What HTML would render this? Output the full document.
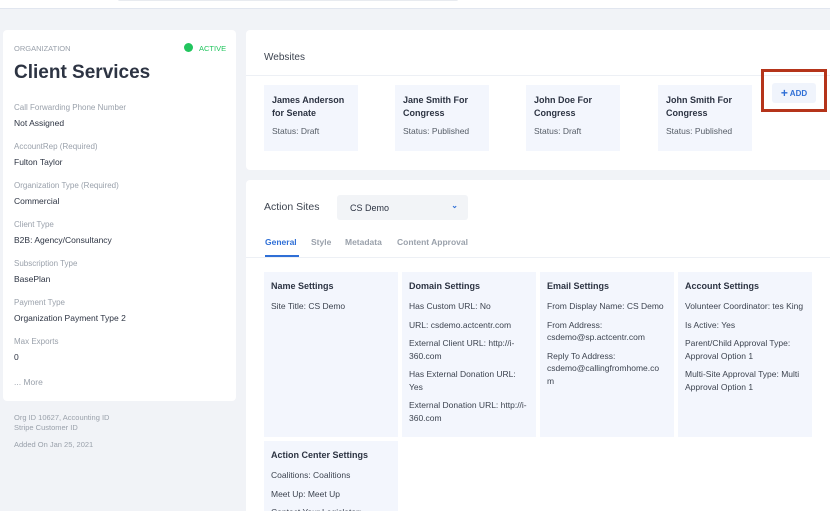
<!DOCTYPE html>
<html><head><meta charset="utf-8"><style>
*{margin:0;padding:0;box-sizing:border-box}
html,body{width:830px;height:511px;overflow:hidden}
body{background:#f1f3f7;font-family:"Liberation Sans",Arial,sans-serif;color:#2d3443;position:relative}
.a{position:absolute}
.card{position:absolute;background:#fff;border-radius:4px}
.lbl{position:absolute;left:11px;font-size:8px;color:#9aa1ab}
.val{position:absolute;left:11px;font-size:8.5px;color:#2d3443}
.ws{position:absolute;top:85px;width:94px;height:66px;background:#f3f6fd;padding:9px 8px}
.ws b{display:block;font-size:9px;line-height:13px;color:#2d3443}
.ws span{display:block;font-size:8.5px;color:#555c66;margin-top:6px}
.cell{position:absolute;background:#f3f6fd;padding:9px 7px}
.cell b{display:block;font-size:9px;color:#2d3443;margin-bottom:9px}
.cell p{font-size:8.5px;line-height:12.5px;color:#3d4450;margin-bottom:6px}
.tab{position:absolute;top:237px;font-size:8.5px;font-weight:bold;color:#9aa1ab}
</style></head><body>
<div class="a" style="left:0;top:0;width:830px;height:9px;background:#fff;border-bottom:1px solid #e1e6ef"></div>
<div class="a" style="left:118px;top:-2px;width:340px;height:3px;border:1px solid #e8ebf0;border-radius:2px;background:#fff"></div>

<div class="card" style="left:3px;top:30px;width:233px;height:371px">
<div class="lbl" style="top:14px;font-size:7.5px">ORGANIZATION</div>
<div class="a" style="left:181px;top:13px;width:9px;height:9px;border-radius:50%;background:#22c55e"></div>
<div class="a" style="left:196px;top:14px;font-size:7.5px;color:#22c55e">ACTIVE</div>
<div class="a" style="left:11px;top:32px;font-size:19px;font-weight:bold;color:#2d3443">Client Services</div>
<div class="lbl" style="top:73px">Call Forwarding Phone Number</div><div class="val" style="top:88px">Not Assigned</div>
<div class="lbl" style="top:112px">AccountRep (Required)</div><div class="val" style="top:127px">Fulton Taylor</div>
<div class="lbl" style="top:151px">Organization Type (Required)</div><div class="val" style="top:166px">Commercial</div>
<div class="lbl" style="top:190px">Client Type</div><div class="val" style="top:205px">B2B: Agency/Consultancy</div>
<div class="lbl" style="top:229px">Subscription Type</div><div class="val" style="top:244px">BasePlan</div>
<div class="lbl" style="top:268px">Payment Type</div><div class="val" style="top:283px">Organization Payment Type 2</div>
<div class="lbl" style="top:307px">Max Exports</div><div class="val" style="top:322px">0</div>
<div class="lbl" style="top:347px;font-size:8.5px">... More</div>
</div>
<div class="a" style="left:14px;top:413px;font-size:7.5px;color:#9aa1ab;line-height:10px">Org ID 10627, Accounting ID<br>Stripe Customer ID</div>
<div class="a" style="left:14px;top:440px;font-size:7.5px;color:#9aa1ab">Added On Jan 25, 2021</div>

<div class="card" style="left:246px;top:30px;width:590px;height:140px">
<div class="a" style="left:18px;top:22px;font-size:10px;color:#3d4450">Websites</div>
<div class="a" style="left:0;top:45px;width:590px;height:1px;background:#edf0f5"></div>
</div>
<div class="ws" style="left:264px"><b>James Anderson for Senate</b><span>Status: Draft</span></div>
<div class="ws" style="left:395px"><b>Jane Smith For Congress</b><span>Status: Published</span></div>
<div class="ws" style="left:526px"><b>John Doe For Congress</b><span>Status: Draft</span></div>
<div class="ws" style="left:658px"><b>John Smith For Congress</b><span>Status: Published</span></div>
<div class="a" style="left:772px;top:83px;width:44px;height:20px;background:#f0f4fc;border-radius:3px;font-size:8px;font-weight:bold;color:#2f6fd6;text-align:center;line-height:20px"><span style="font-size:12px;vertical-align:-1px">+</span> ADD</div>
<div class="a" style="left:761px;top:69px;width:66px;height:43px;border:3px solid #b5341a"></div>

<div class="card" style="left:246px;top:180px;width:590px;height:331px;border-radius:4px 4px 0 0">
<div class="a" style="left:18px;top:21px;font-size:10.5px;color:#3d4450">Action Sites</div>
<div class="a" style="left:91px;top:15px;width:131px;height:25px;background:#f2f4f7;border-radius:3px;font-size:9px;color:#2d3443;padding:8px 0 0 13px">CS Demo<span style="position:absolute;right:10px;top:6px;color:#2f6fd6;font-size:8px;font-weight:bold">&#8964;</span></div>
<div class="a" style="left:0;top:77px;width:590px;height:1px;background:#edf0f5"></div>
<div class="a" style="left:19px;top:75px;width:34px;height:2px;background:#2f6fd6"></div>
</div>
<div class="tab" style="left:265px;color:#2f6fd6">General</div>
<div class="tab" style="left:311px">Style</div>
<div class="tab" style="left:345px">Metadata</div>
<div class="tab" style="left:397px">Content Approval</div>

<div class="cell" style="left:264px;top:272px;width:134px;height:165px"><b>Name Settings</b><p>Site Title: CS Demo</p></div>
<div class="cell" style="left:402px;top:272px;width:134px;height:165px"><b>Domain Settings</b><p>Has Custom URL: No</p><p>URL: csdemo.actcentr.com</p><p>External Client URL: http://i-360.com</p><p>Has External Donation URL: Yes</p><p>External Donation URL: http://i-360.com</p></div>
<div class="cell" style="left:540px;top:272px;width:134px;height:165px"><b>Email Settings</b><p>From Display Name: CS Demo</p><p>From Address:<br>csdemo@sp.actcentr.com</p><p>Reply To Address:<br>csdemo@callingfromhome.co<br>m</p></div>
<div class="cell" style="left:678px;top:272px;width:134px;height:165px"><b>Account Settings</b><p>Volunteer Coordinator: tes King</p><p>Is Active: Yes</p><p>Parent/Child Approval Type: Approval Option 1</p><p>Multi-Site Approval Type: Multi Approval Option 1</p></div>
<div class="cell" style="left:264px;top:441px;width:134px;height:80px"><b>Action Center Settings</b><p>Coalitions: Coalitions</p><p>Meet Up: Meet Up</p><p>Contact Your Legislator:</p></div>
</body></html>
